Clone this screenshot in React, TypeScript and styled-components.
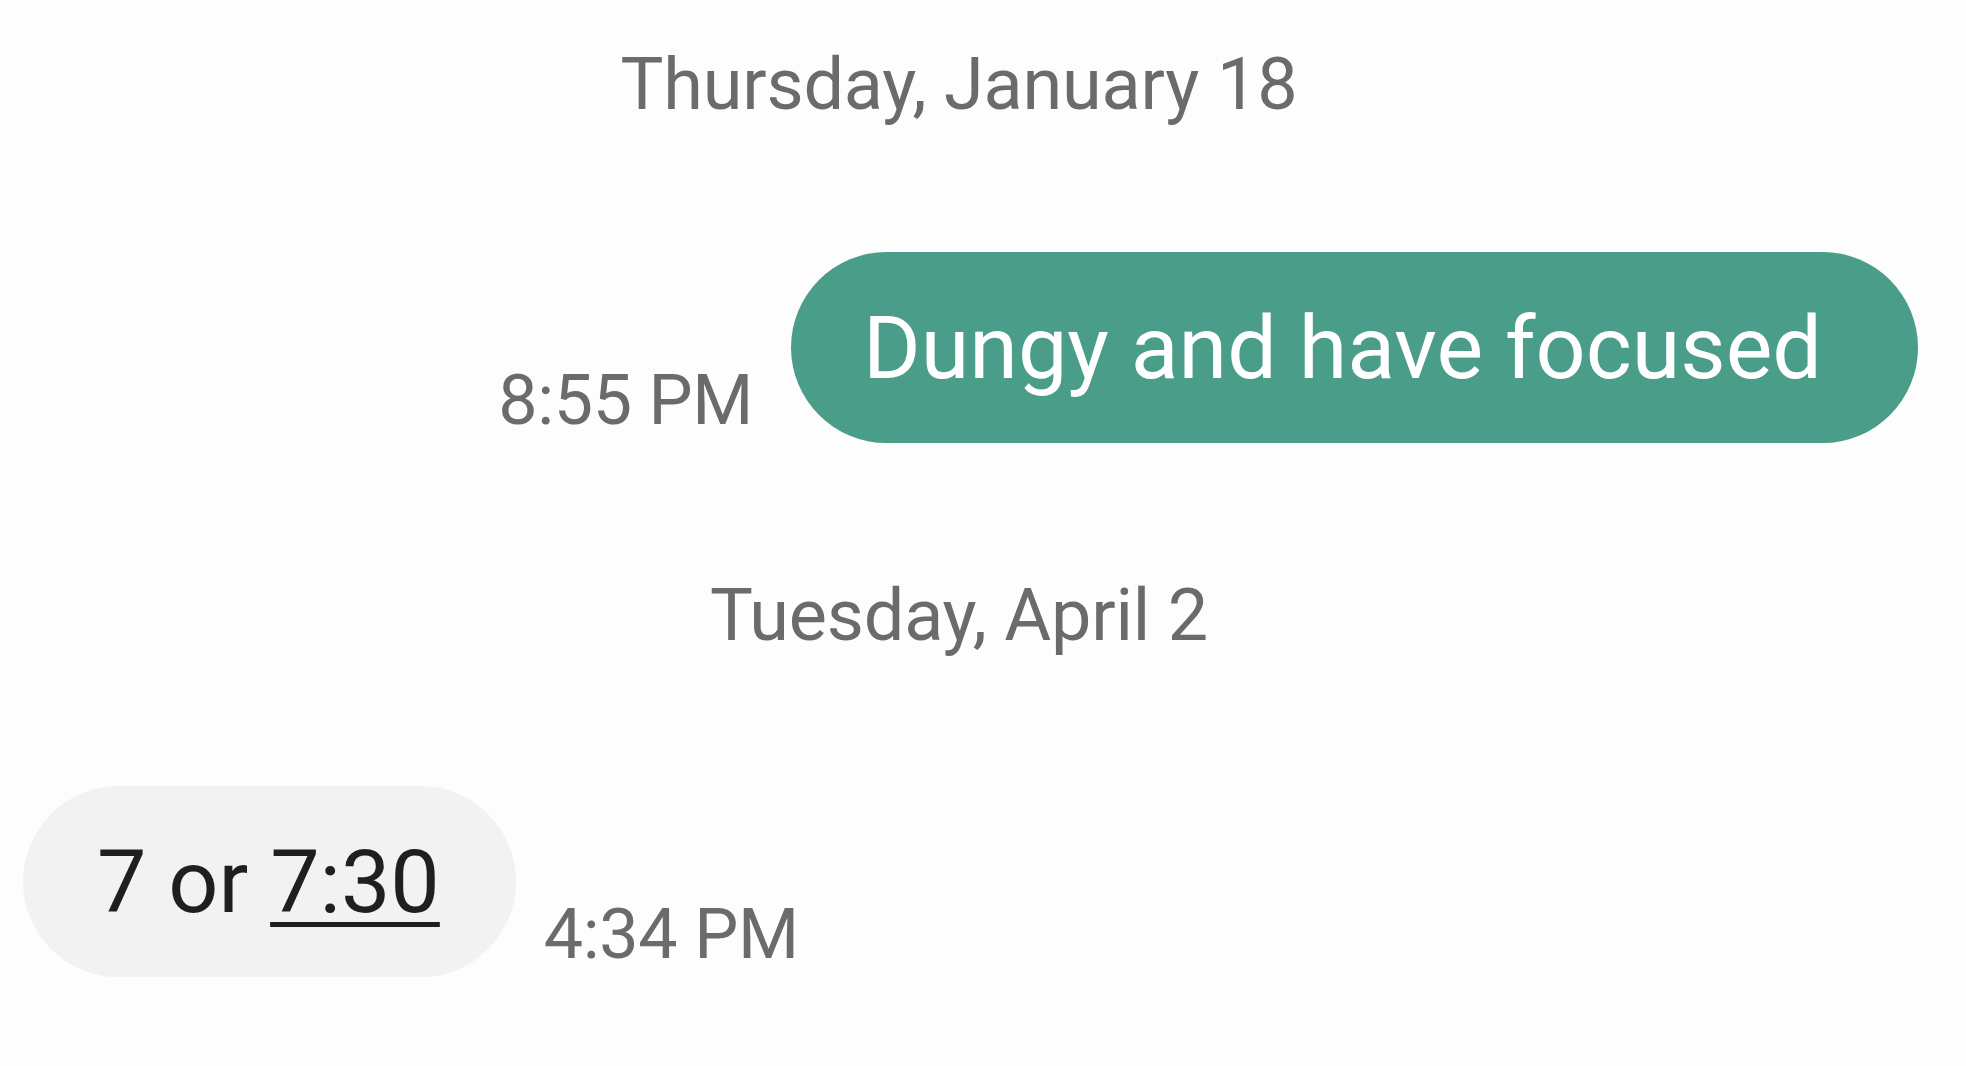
import React from "react";
import styled, { createGlobalStyle } from "styled-components";

const Global = createGlobalStyle`
  html, body {
    margin: 0;
    padding: 0;
    background: #fdfdfd;
  }
  body {
    font-family: Roboto, "Noto Sans", "Liberation Sans", sans-serif;
  }
`;

const Page = styled.div`
  width: 1918px;
  height: 1066px;
  box-sizing: border-box;
  padding-top: 49px;
  display: flex;
  flex-direction: column;
  background: #fdfdfd;
  overflow: hidden;
`;

const DateLabel = styled.div<{ $gap: number }>`
  margin-top: ${(p) => p.$gap}px;
  align-self: center;
  font-size: 72px;
  line-height: 72px;
  letter-spacing: -0.2px;
  color: #6b6b6b;
  white-space: nowrap;
`;

const Row = styled.div<{ $outgoing?: boolean; $gap: number }>`
  margin-top: ${(p) => p.$gap}px;
  padding-left: ${(p) => (p.$outgoing ? 0 : 23)}px;
  display: flex;
  flex-direction: ${(p) => (p.$outgoing ? "row-reverse" : "row")};
  align-items: flex-end;
  gap: ${(p) => (p.$outgoing ? 38 : 28)}px;
`;

const Bubble = styled.div<{ $outgoing?: boolean }>`
  height: 191px;
  box-sizing: border-box;
  display: flex;
  align-items: center;
  padding: ${(p) => (p.$outgoing ? "0 96px 0 72px" : "0 76px 0 74px")};
  border-radius: 96px;
  background: ${(p) => (p.$outgoing ? "#4a9e89" : "#f2f2f2")};
  color: ${(p) => (p.$outgoing ? "#ffffff" : "#1f1f1f")};
  font-size: 88px;
  line-height: 1;
  white-space: nowrap;
`;

const Link = styled.span`
  text-decoration: underline;
  text-decoration-thickness: 5px;
  text-underline-offset: 10px;
`;

const Time = styled.div`
  margin-bottom: 8px;
  font-size: 70px;
  line-height: 70px;
  letter-spacing: -0.4px;
  color: #6b6b6b;
  white-space: nowrap;
`;

export default function App() {
  return (
    <>
      <Global />
      <Page>
        <DateLabel $gap={0}>Thursday, January 18</DateLabel>
        <Row $outgoing $gap={131}>
          <Bubble $outgoing>Dungy and have focused</Bubble>
          <Time>8:55 PM</Time>
        </Row>
        <DateLabel $gap={137}>Tuesday, April 2</DateLabel>
        <Row $gap={134}>
          <Bubble>
            7 or&nbsp;<Link>7:30</Link>
          </Bubble>
          <Time>4:34 PM</Time>
        </Row>
      </Page>
    </>
  );
}
